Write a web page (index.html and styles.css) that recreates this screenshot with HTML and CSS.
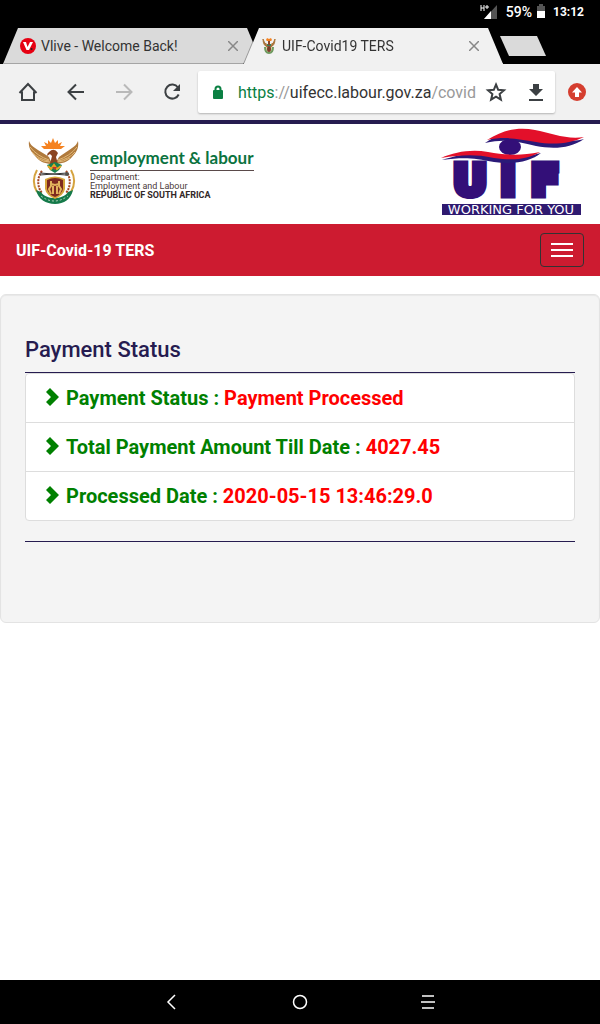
FILE: index.html
```html
<!DOCTYPE html>
<html lang="en">
<head>
    <meta charset="UTF-8">
    <meta name="viewport" content="width=device-width, initial-scale=1.0">
    <title>UIF-Covid19 TERS</title>
    <link rel="stylesheet" href="styles.css">
</head>
<body>
    <div class="status-bar">
        <svg class="signal" width="18" height="16" viewBox="0 0 18 16">
            <path d="M17 1V15H4z" fill="#555"/>
            <path d="M11 7V15H4z" fill="#fff"/>
            <path d="M0 0h8v8h-8z" fill="#000"/>
            <path d="M1 1v6M4 1v6M1 4h3M5 3h4M7 1v4" stroke="#fff" fill="none"/>
        </svg>
        <span class="battery-level">59%</span>
        <svg class="battery" width="8" height="14" viewBox="0 0 8 14">
            <path d="M2 0h4v2h2v12H0V2h2z" fill="#555"/>
            <path d="M0 7h8v7H0z" fill="#fff"/>
        </svg>
        <span class="clock">13:12</span>
    </div>

    <div class="tabs">
        <div class="tab">
            <div class="tab-shape">
                <svg width="16" height="16" viewBox="0 0 16 16">
                    <circle cx="8" cy="8" r="8" fill="#e60012"/>
                    <path d="M3 4h3l1.500 5L10 4h3l-4 8H6.500z" fill="#fff"/>
                    <circle cx="11.500" cy="11" r="1" fill="#222"/>
                </svg>
                <span class="tab-title">Vlive - Welcome Back!</span>
                <button class="close" aria-label="Close tab">
                    <svg width="10" height="10" viewBox="0 0 10 10"><path d="M0 0L10 10M10 0L0 10"/></svg>
                </button>
            </div>
        </div>
        <div class="tab active">
            <div class="tab-shape">
                <svg width="16" height="16" viewBox="0 0 16 16">
                    <path d="M2 1q1 5 5 6v2q-5-1-5-8M14 1q-1 5-5 6v2q5-1 5-8" fill="#a9743a" stroke="#a9743a"/>
                    <path d="M5 2l1-2 2 1 2-1 1 2-1 1H6z" fill="#f58220"/>
                    <path d="M4 9q0 6 4 6t4-6" fill="#d8d7a0" stroke="#6f9a60" stroke-width="2"/>
                    <ellipse cx="8" cy="11" rx="2" ry="3" fill="#7c3b2b"/>
                    <path d="M6 6h4v2H6z" fill="#3f7d58"/>
                    <path d="M7 3h2v4H7z" fill="#8a4528"/>
                </svg>
                <span class="tab-title">UIF-Covid19 TERS</span>
                <button class="close" aria-label="Close tab">
                    <svg width="10" height="10" viewBox="0 0 10 10"><path d="M0 0L10 10M10 0L0 10"/></svg>
                </button>
            </div>
        </div>
        <button class="new-tab" aria-label="New tab"></button>
    </div>

    <div class="toolbar">
        <button aria-label="Home">
            <svg width="24" height="24" viewBox="0 0 24 24"><path d="M3.500 13L12 4l8.500 9M6 11.500V20h12v-8.500"/></svg>
        </button>
        <button aria-label="Back">
            <svg width="24" height="24" viewBox="0 0 24 24"><path d="M20 12H5M12 4.500L4.500 12l7.500 7.500"/></svg>
        </button>
        <button class="forward" aria-label="Forward">
            <svg width="24" height="24" viewBox="0 0 24 24"><path d="M4 12h15M12 4.500l7.500 7.500-7.500 7.500"/></svg>
        </button>
        <button aria-label="Reload">
            <svg width="24" height="24" viewBox="0 0 24 24"><path d="M18 7.500A7 7 0 1 0 18.700 14.500"/><path d="M20 4v7h-7z" class="solid"/></svg>
        </button>
        <div class="address">
            <svg class="lock" width="12" height="16" viewBox="0 0 12 16">
                <rect x="1" y="6" width="10" height="9" rx="1" fill="#0b8043"/>
                <path d="M3.500 7V5a2.500 2.500 0 0 1 5 0v2" fill="none"/>
            </svg>
            <div class="url" role="textbox" aria-label="Address" contenteditable="true" spellcheck="false"><span class="secure">https</span><span class="dim">://</span>uifecc.labour.gov.za<span class="dim">/covid</span></div>
            <button aria-label="Bookmark">
                <svg width="24" height="24" viewBox="0 0 24 24"><path d="M12 4.500l2.200 5.300 5.800.500-4.400 3.800 1.300 5.600L12 16.700l-4.900 3 1.300-5.600L4 10.300l5.800-.500z"/></svg>
            </button>
            <button aria-label="Download">
                <svg width="24" height="24" viewBox="0 0 24 24"><path class="solid" d="M9 4h6v5h4l-7 7-7-7h4zM5 19h14v2H5z"/></svg>
            </button>
        </div>
        <button class="update" aria-label="Update available">
            <svg width="18" height="18" viewBox="0 0 18 18">
                <circle cx="9" cy="9" r="9" fill="#d53e2f"/>
                <path d="M9 4l5 5.500h-3V14H7V9.500H4z" fill="#fff"/>
            </svg>
        </button>
    </div>

    <header class="banner">
        <div class="department">
            <!-- coat of arms -->
            <svg width="65" height="80" viewBox="0 0 65 80">
                <path d="M24 17l-3-3 5 0-2-4 4 2 0-4 3 3 2-5 2 5 3-3 0 4 4-2-2 4 5 0-4 3z" fill="#f58220"/>
                <path d="M9 9c1 3 3 5 6 7 4 3 10 6 14 9l3 7c-6 0-12-2-16-7-5-5-8-10-7-16z" fill="#b07a3c"/>
                <path d="M58 9c-1 3-3 5-6 7-4 3-9 6-13 9l-4 7c6 0 13-2 17-7 5-5 7-10 6-16z" fill="#b07a3c"/>
                <path d="M10 15q7 9 19 13M12 20q6 7 17 9M17 26q6 4 13 4M57 15q-7 9-19 13M55 20q-6 7-17 9M50 26q-6 4-13 4" fill="none" stroke="#e2b978"/>
                <path d="M29 20q5-5 9 1l-2 4 2 7h-8l2-8-2-2-3 2q0-3 2-4z" fill="#8b4420"/>
                <path d="M35 30l7 3-3 5-4 3-5-3-3-5z" fill="#17804f"/>
                <path d="M28 34l3 3 3-4 3 4 4-3" fill="none" stroke="#e5a623" stroke-width="2"/>
                <path d="M32 35h5l-2 3z" fill="#c8312d"/>
                <path d="M17 38c-4 7-4 15 0 22M51 38c4 7 4 15 0 22" fill="none" stroke="#d5a33f" stroke-width="2"/>
                <path d="M22 39c-5 6-5 16 0 22M46 39c5 6 5 16 0 22" fill="none" stroke="#a64a26" stroke-width="2" stroke-dasharray="2 1"/>
                <path d="M16 58l5 2c5 8 22 8 27 0l5-2c-2 9-9 14-18 14S18 67 16 58z" fill="#157a4a"/>
                <path d="M21 64q13 10 27 0" fill="none" stroke="#b8d5bd" stroke-dasharray="2 2"/>
                <path d="M25 47q10-5 20 0v10q-1 6-10 10-9-4-10-10z" fill="#d7a63b"/>
                <path d="M27 48q8-4 16 0v9q-1 5-8 8-7-3-8-8z" fill="#7e2a20"/>
                <path d="M31 49v5l-2 3 2 5M39 49v5l2 3-2 5M31 52l4 1 4-1M33 54v8M37 54v8" fill="none" stroke="#e2b35c" stroke-width="2"/>
                <path d="M20 41l26 2M20 43l27-2" stroke="#333" fill="none"/>
                <circle cx="47" cy="42" r="2" fill="#55504a"/>
            </svg>
            <div class="department-text">
                <div class="department-name">employment &amp; labour</div>
                <div>Department:</div>
                <div>Employment and Labour</div>
                <strong>REPUBLIC OF SOUTH AFRICA</strong>
            </div>
        </div>
        <svg class="uif-logo" width="148" height="92" viewBox="0 0 148 92">
            <text class="uif-letter" x="31" y="69">U</text>
            <text class="uif-letter" x="69" y="69">I</text>
            <text class="uif-letter" x="106" y="69">F</text>
            <path d="M46 17C66 4 80 3 96 6s30 12 49 7c-14 10-32 10-48 7-18-4-30-8-51-3z" fill="#2b1a78"/>
            <path d="M48 14C66 3 80 1 96 4s32 10 49 7c-14 7-32 8-48 5-18-3-30-6-49-2z" fill="#e3102a"/>
            <ellipse cx="71" cy="21" rx="11" ry="8" fill="#330f78"/>
            <path d="M3 34c14-4 30-9 47-5 18 3 30 4 52-2-10 8-26 12-47 9-20-4-30-5-52-2z" fill="#2b1a78"/>
            <path d="M2 32c14-6 30-9 47-6 18 3 32 4 52 0-12 7-26 9-46 6-20-4-32-3-53 0z" fill="#e3102a"/>
            <rect x="3" y="78" width="139" height="11" fill="#2f1a70"/>
            <text class="uif-motto" x="72" y="88">WORKING FOR YOU</text>
        </svg>
    </header>

    <nav class="navbar">
        <a class="brand" href="#">UIF-Covid-19 TERS</a>
        <button class="menu-btn" aria-label="Toggle navigation">
            <span></span>
            <span></span>
            <span></span>
        </button>
    </nav>

    <main>
        <div class="well">
            <h1>Payment Status</h1>
            <ul class="status-list">
                <li>
                    <svg width="16" height="20" viewBox="0 0 16 20"><path d="M0 4l4-4 9 9-9 9-4-4 5-5z"/></svg>
                    <span>Payment Status : <span class="value">Payment Processed</span></span>
                </li>
                <li>
                    <svg width="16" height="20" viewBox="0 0 16 20"><path d="M0 4l4-4 9 9-9 9-4-4 5-5z"/></svg>
                    <span>Total Payment Amount Till Date : <span class="value">4027.45</span></span>
                </li>
                <li>
                    <svg width="16" height="20" viewBox="0 0 16 20"><path d="M0 4l4-4 9 9-9 9-4-4 5-5z"/></svg>
                    <span>Processed Date : <span class="value">2020-05-15 13:46:29.0</span></span>
                </li>
            </ul>
            <hr>
        </div>
    </main>

    <div class="system-nav">
        <button aria-label="Back">
            <svg width="16" height="16" viewBox="0 0 16 16"><path d="M11 1L4 8l7 7"/></svg>
        </button>
        <button aria-label="Home">
            <svg width="16" height="16" viewBox="0 0 16 16"><circle cx="8" cy="8" r="6.500"/></svg>
        </button>
        <button aria-label="Recent apps">
            <svg width="16" height="16" viewBox="0 0 16 16"><path d="M2 2h12M1 8h14M2 14h12"/></svg>
        </button>
    </div>
</body>
</html>
```
FILE: styles.css
```css
* {
    box-sizing: border-box;
}
body {
    margin: 0;
    min-height: 100vh;
    display: flex;
    flex-direction: column;
    font-family: Roboto, sans-serif;
    background-color: #fff;
}
button {
    display: flex;
    align-items: center;
    justify-content: center;
    padding: 0;
    border: none;
    background: none;
    cursor: pointer;
}
svg {
    flex-shrink: 0;
}
.status-bar {
    display: flex;
    align-items: center;
    justify-content: flex-end;
    height: 28px;
    padding: 0 16px 4px;
    background-color: #000;
    color: #fff;
    font-weight: 700;
}
.battery-level {
    margin: 0 5px 0 8px;
    font-size: 14px;
    font-weight: 500;
}
.battery {
    margin-bottom: 2px;
}
.clock {
    margin-left: 8px;
    font-size: 12px;
}
.tabs {
    display: flex;
    height: 36px;
    padding-left: 3px;
    background-color: #000;
}
.tab {
    width: 259px;
}
.tab-shape {
    display: flex;
    align-items: center;
    gap: 5px;
    height: 36px;
    padding: 0 24px 0 17px;
    background-color: #dadada;
    border-bottom: 1px solid #a5a5a5;
    clip-path: polygon(15px 0, calc(100% - 15px) 0, 100% 100%, 0 100%);
}
.tab.active {
    margin-left: -18px;
    filter: drop-shadow(-1px 0 0 rgba(0, 0, 0, 0.3));
}
.active .tab-shape {
    background-color: #f1f1f1;
    border-bottom-color: #f1f1f1;
}
.tab-title {
    flex: 1;
    font-size: 14px;
    color: #333;
    white-space: nowrap;
}
.close path {
    stroke: #888;
    stroke-width: 1.5;
}
.new-tab {
    width: 46px;
    height: 20px;
    margin-top: 8px;
    margin-left: -3px;
    background-color: #dadada;
    clip-path: polygon(0 0, 37px 0, 100% 100%, 9px 100%);
}
.toolbar {
    display: flex;
    align-items: center;
    height: 56px;
    padding: 0 14px 0 16px;
    gap: 24px;
    background-color: #f1f1f1;
}
.toolbar path {
    fill: none;
    stroke: #3c4043;
    stroke-width: 2;
}
.toolbar path.solid {
    fill: #3c4043;
    stroke: none;
}
.toolbar .forward path {
    stroke: #b9b9b9;
}
.toolbar .lock path {
    stroke: #0b8043;
}
.toolbar .update path {
    fill: #fff;
    stroke: none;
}
.address {
    flex: 1;
    min-width: 0;
    display: flex;
    align-items: center;
    gap: 16px;
    height: 42px;
    margin: 0 -11px 0 -10px;
    padding: 0 7px 0 14px;
    background-color: #fff;
    border-radius: 2px;
    box-shadow: 0 1px 2px rgba(0, 0, 0, 0.25);
}
.url {
    flex: 1;
    min-width: 0;
    margin: 0 -8px 0 -2px;
    overflow: hidden;
    white-space: nowrap;
    font-size: 16px;
    color: #333;
    outline: none;
}
.secure {
    color: #0b8043;
}
.dim {
    color: #999;
}
.banner {
    display: flex;
    justify-content: space-between;
    height: 104px;
    padding: 0 13px 0 20px;
    border-top: 4px solid #261c50;
}
.department {
    display: flex;
    gap: 5px;
    padding-top: 8px;
}
.department-text {
    padding-top: 14px;
    font-size: 9px;
    line-height: 9px;
    color: #4a3a3a;
}
.department-name {
    margin-bottom: 2px;
    border-bottom: 1px solid #5a4a4a;
    font-family: Lato, sans-serif;
    font-size: 17px;
    font-weight: 700;
    line-height: 24px;
    color: #0b7340;
}
.department-text strong {
    display: block;
    color: #332828;
}
.uif-logo {
    margin-top: 2px;
}
.uif-letter {
    font-family: "DejaVu Sans", sans-serif;
    font-size: 42px;
    font-weight: 700;
    text-anchor: middle;
    fill: #330f78;
    stroke: #330f78;
    stroke-width: 7px;
}
.uif-motto {
    font-family: "DejaVu Sans", sans-serif;
    font-size: 13px;
    text-anchor: middle;
    fill: #fff;
}
.navbar {
    display: flex;
    align-items: center;
    justify-content: space-between;
    height: 52px;
    padding: 0 16px;
    background-color: #cd1b30;
}
.brand {
    color: #fff;
    font-size: 16px;
    font-weight: 700;
    text-decoration: none;
}
.menu-btn {
    flex-direction: column;
    gap: 4px;
    width: 44px;
    height: 34px;
    border: 1px solid #333;
    border-radius: 4px;
}
.menu-btn span {
    width: 22px;
    height: 2px;
    background-color: #fff;
}
main {
    flex: 1;
    padding-top: 18px;
}
.well {
    padding: 40px 24px 80px;
    background-color: #f4f4f4;
    border: 1px solid #e3e3e3;
    border-radius: 6px;
    box-shadow: inset 0 1px 1px rgba(0, 0, 0, 0.05);
}
h1 {
    margin: 0;
    padding-bottom: 7px;
    border-bottom: 1px solid #261c50;
    color: #261c50;
    font-size: 22px;
    font-weight: 500;
    line-height: 30px;
}
.status-list {
    margin: 0;
    padding: 0;
    list-style: none;
    background-color: #fff;
    border: 1px solid #ddd;
    border-radius: 4px;
}
.status-list li {
    display: flex;
    align-items: center;
    gap: 4px;
    height: 49px;
    padding: 0 20px;
    border-bottom: 1px solid #ddd;
    color: green;
    font-size: 20px;
    font-weight: 700;
}
.status-list li:last-child {
    height: 48px;
    border-bottom: none;
}
.status-list svg {
    fill: green;
}
.value {
    color: red;
}
hr {
    margin: 20px 0 0;
    border: none;
    border-top: 1px solid #261c50;
}
.system-nav {
    display: flex;
    justify-content: center;
    gap: 112px;
    height: 44px;
    background-color: #000;
}
.system-nav svg {
    fill: none;
    stroke: #fff;
    stroke-width: 1.5;
}
```
